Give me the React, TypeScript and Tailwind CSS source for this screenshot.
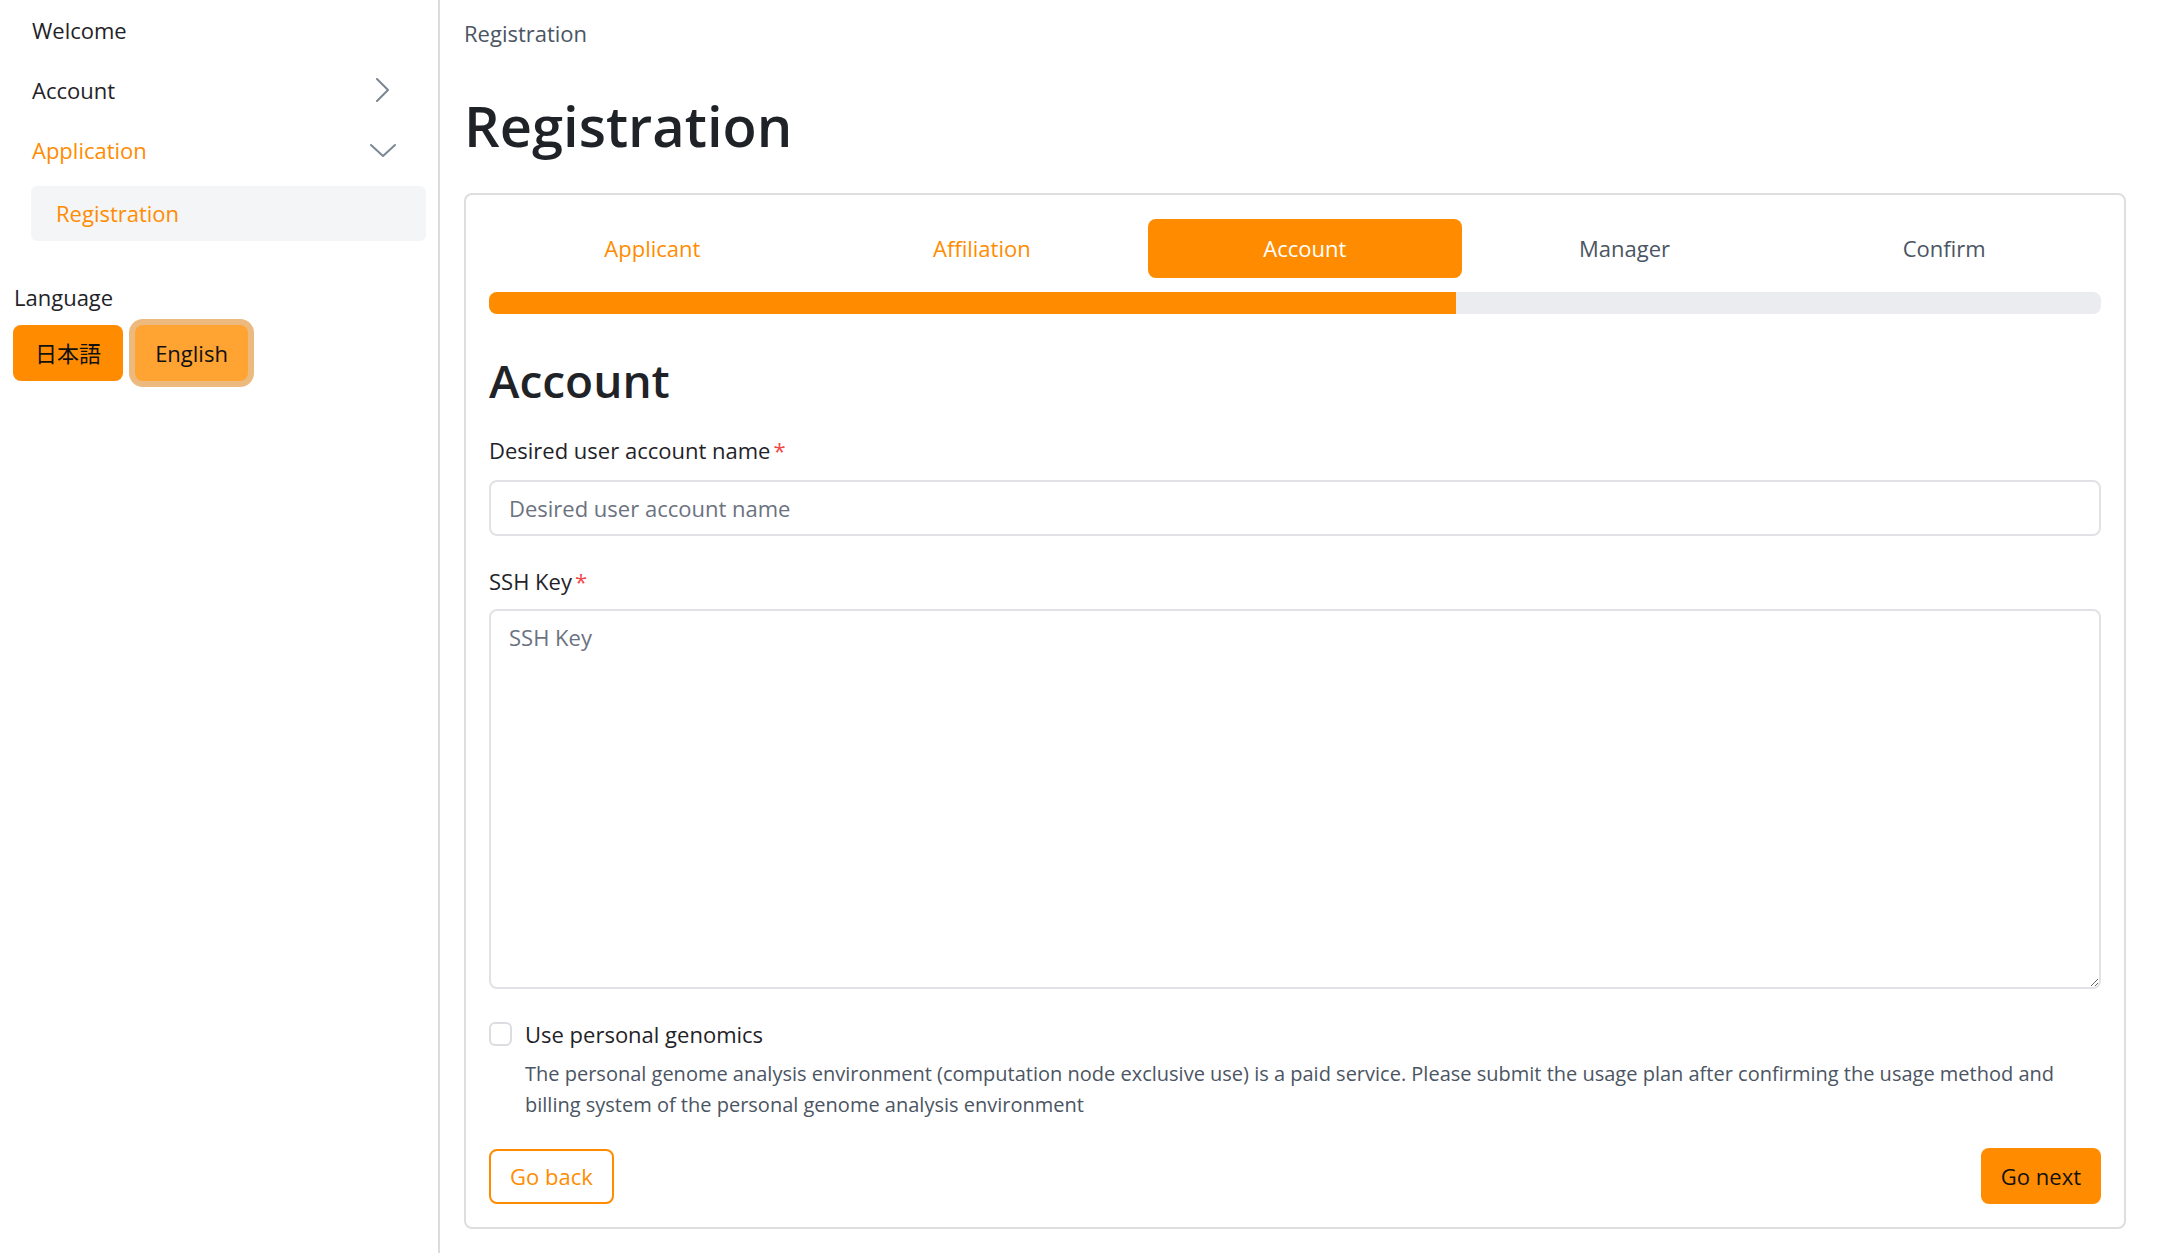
import React from 'react';

const font = { fontFamily: '"Open Sans", "Noto Sans CJK JP", sans-serif' };

const ChevronRight = () => (
  <svg width="16" height="24" viewBox="0 0 16 24" fill="none" className="shrink-0">
    <path d="M2 1 L13 12 L2 23" stroke="#7b8794" strokeWidth="2" strokeLinecap="round" strokeLinejoin="round" />
  </svg>
);

const ChevronDown = () => (
  <svg width="26" height="15" viewBox="0 0 26 15" fill="none" className="shrink-0">
    <path d="M1 2 L13 13 L25 2" stroke="#7b8794" strokeWidth="2" strokeLinecap="round" strokeLinejoin="round" />
  </svg>
);

const steps = ['Applicant', 'Affiliation', 'Account', 'Manager', 'Confirm'];
const current = 2;

const Sidebar = () => (
  <aside className="w-[440px] shrink-0 border-r-2 border-[#dcdcdc] min-h-[1253px] pl-[13px] pr-[12px]">
    <ul className="ml-[18px]">
      <li className="h-[60px] flex items-center pl-[1px] text-[22px] text-[#1f2328]">Welcome</li>
      <li className="h-[60px] flex items-center justify-between pl-[1px] pr-[35px] text-[22px] text-[#1f2328]">
        <span>Account</span>
        <ChevronRight />
      </li>
      <li className="h-[60px] flex items-center justify-between pl-[1px] pr-[30px] text-[22px] text-[#ff8c00]">
        <span>Application</span>
        <ChevronDown />
      </li>
      <li className="mt-[6px] h-[55px] flex items-center rounded-md bg-[#f4f5f7] pl-[25px] text-[22px] text-[#ff8c00]">
        Registration
      </li>
    </ul>
    <div className="mt-[40px] pl-[1px] text-[22px] text-[#1f2328] leading-[32px]">Language</div>
    <div className="mt-[12px] flex items-center gap-[12px]">
      <button className="h-[56px] w-[110px] rounded-[8px] bg-[#ff8c00] text-[22px] text-[#111]">日本語</button>
      <button className="h-[56px] w-[113px] rounded-[8px] bg-[#ffa333] text-[22px] text-[#111] ring-[6px] ring-[#ecba7e]">
        English
      </button>
    </div>
  </aside>
);

const Label = ({ children }: { children: React.ReactNode }) => (
  <label className="block text-[22px] leading-[30px] text-[#1f2328]">
    {children}
    <span className="ml-[3px] text-[#f04848]">*</span>
  </label>
);

export default function App() {
  return (
    <div className="flex bg-white" style={font}>
      <Sidebar />
      <main className="flex-1 pl-[24px] pr-[34px]">
        <div className="pt-[18px] text-[22px] leading-[30px] text-[#4b5563]">Registration</div>
        <h1 className="mt-[42px] text-[56px] leading-[70px] font-semibold text-[#1f2328]">Registration</h1>
        <div className="mt-[33px] rounded-[8px] border-2 border-[#dedede] px-[23px] pb-[23px] pt-[24px]">
          <div className="flex gap-[2px]">
            {steps.map((s, i) => (
              <div
                key={s}
                className={
                  i === current
                    ? 'flex-auto h-[59px] flex items-center justify-center rounded-[8px] bg-[#ff8c00] text-white text-[22px]'
                    : i < current
                    ? 'flex-auto h-[59px] flex items-center justify-center text-[#ff8c00] text-[22px]'
                    : 'flex-auto h-[59px] flex items-center justify-center text-[#4b5563] text-[22px]'
                }
              >
                {s}
              </div>
            ))}
          </div>
          <div className="mt-[14px] h-[22px] rounded-[8px] bg-[#ebecf0] overflow-hidden">
            <div className="h-full bg-[#ff8c00]" style={{ width: '60%' }} />
          </div>
          <h2 className="mt-[39px] text-[46px] leading-[54px] font-semibold text-[#1f2328]">Account</h2>
          <div className="mt-[28px]">
            <Label>Desired user account name</Label>
            <input
              className="mt-[15px] block w-full h-[56px] rounded-[8px] border-2 border-[#e1e2e6] px-[18px] text-[22px] text-[#1f2328] placeholder:text-[#6b7280] outline-none"
              placeholder="Desired user account name"
            />
          </div>
          <div className="mt-[30px]">
            <Label>SSH Key</Label>
            <textarea
              className="mt-[13px] block w-full h-[380px] rounded-[8px] border-2 border-[#e1e2e6] px-[18px] py-[14px] text-[22px] leading-[24px] text-[#1f2328] placeholder:text-[#6b7280] outline-none"
              placeholder="SSH Key"
            />
          </div>
          <div className="mt-[30px] flex items-center gap-[13px]">
            <span className="h-[24px] w-[23px] rounded-[6px] border-2 border-[#dcdde1] bg-white" />
            <span className="text-[22px] leading-[30px] text-[#1f2328]">Use personal genomics</span>
          </div>
          <p className="mt-[9px] pl-[36px] text-[20px] leading-[31px] text-[#4b5563]">
            The personal genome analysis environment (computation node exclusive use) is a paid service. Please submit the
            usage plan after confirming the usage method and billing system of the personal genome analysis environment
          </p>
          <div className="mt-[28px] flex items-center justify-between">
            <button className="h-[55px] px-[19px] rounded-[8px] border-2 border-[#ff8c00] text-[22px] text-[#ff8c00] bg-white">
              Go back
            </button>
            <button className="h-[56px] px-[20px] rounded-[8px] bg-[#ff8c00] text-[22px] text-[#111]">Go next</button>
          </div>
        </div>
      </main>
    </div>
  );
}
